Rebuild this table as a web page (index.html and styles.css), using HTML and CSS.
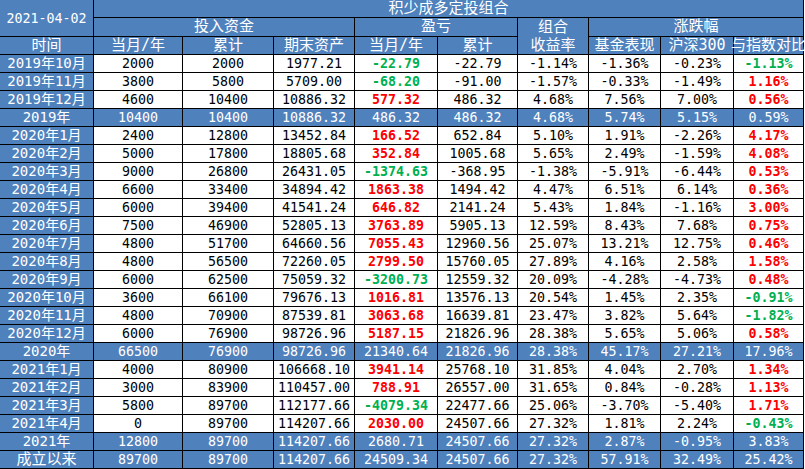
FILE: index.html
```html
<!DOCTYPE html>
<html lang="zh-CN">
<head>
<meta charset="utf-8">
<title>积少成多定投组合</title>
<link rel="stylesheet" href="styles.css">
</head>
<body>
<div class="sheet">
  <div class="c h date">2021-04-02</div>
  <div class="c h zh title">积少成多定投组合</div>
  <div class="c h zh span3">投入资金</div>
  <div class="c h zh span2">盈亏</div>
  <div class="c h zh rate">组合<br>收益率</div>
  <div class="c h zh span3">涨跌幅</div>
  <div class="c h zh">时间</div>
  <div class="c h zh">当月/年</div>
  <div class="c h zh">累计</div>
  <div class="c h zh">期末资产</div>
  <div class="c h zh">当月/年</div>
  <div class="c h zh">累计</div>
  <div class="c h zh">基金表现</div>
  <div class="c h zh">沪深300</div>
  <div class="c h zh">与指数对比</div>

  <div class="c h lab">2019年10月</div><div class="c">2000</div><div class="c">2000</div><div class="c">1977.21</div><div class="c g">-22.79</div><div class="c">-22.79</div><div class="c">-1.14%</div><div class="c">-1.36%</div><div class="c">-0.23%</div><div class="c g">-1.13%</div>
  <div class="c h lab">2019年11月</div><div class="c">3800</div><div class="c">5800</div><div class="c">5709.00</div><div class="c g">-68.20</div><div class="c">-91.00</div><div class="c">-1.57%</div><div class="c">-0.33%</div><div class="c">-1.49%</div><div class="c r">1.16%</div>
  <div class="c h lab">2019年12月</div><div class="c">4600</div><div class="c">10400</div><div class="c">10886.32</div><div class="c r">577.32</div><div class="c">486.32</div><div class="c">4.68%</div><div class="c">7.56%</div><div class="c">7.00%</div><div class="c r">0.56%</div>
  <div class="c h lab">2019年</div><div class="c h">10400</div><div class="c h">10400</div><div class="c h">10886.32</div><div class="c h">486.32</div><div class="c h">486.32</div><div class="c h">4.68%</div><div class="c h">5.74%</div><div class="c h">5.15%</div><div class="c h">0.59%</div>
  <div class="c h lab">2020年1月</div><div class="c">2400</div><div class="c">12800</div><div class="c">13452.84</div><div class="c r">166.52</div><div class="c">652.84</div><div class="c">5.10%</div><div class="c">1.91%</div><div class="c">-2.26%</div><div class="c r">4.17%</div>
  <div class="c h lab">2020年2月</div><div class="c">5000</div><div class="c">17800</div><div class="c">18805.68</div><div class="c r">352.84</div><div class="c">1005.68</div><div class="c">5.65%</div><div class="c">2.49%</div><div class="c">-1.59%</div><div class="c r">4.08%</div>
  <div class="c h lab">2020年3月</div><div class="c">9000</div><div class="c">26800</div><div class="c">26431.05</div><div class="c g">-1374.63</div><div class="c">-368.95</div><div class="c">-1.38%</div><div class="c">-5.91%</div><div class="c">-6.44%</div><div class="c r">0.53%</div>
  <div class="c h lab">2020年4月</div><div class="c">6600</div><div class="c">33400</div><div class="c">34894.42</div><div class="c r">1863.38</div><div class="c">1494.42</div><div class="c">4.47%</div><div class="c">6.51%</div><div class="c">6.14%</div><div class="c r">0.36%</div>
  <div class="c h lab">2020年5月</div><div class="c">6000</div><div class="c">39400</div><div class="c">41541.24</div><div class="c r">646.82</div><div class="c">2141.24</div><div class="c">5.43%</div><div class="c">1.84%</div><div class="c">-1.16%</div><div class="c r">3.00%</div>
  <div class="c h lab">2020年6月</div><div class="c">7500</div><div class="c">46900</div><div class="c">52805.13</div><div class="c r">3763.89</div><div class="c">5905.13</div><div class="c">12.59%</div><div class="c">8.43%</div><div class="c">7.68%</div><div class="c r">0.75%</div>
  <div class="c h lab">2020年7月</div><div class="c">4800</div><div class="c">51700</div><div class="c">64660.56</div><div class="c r">7055.43</div><div class="c">12960.56</div><div class="c">25.07%</div><div class="c">13.21%</div><div class="c">12.75%</div><div class="c r">0.46%</div>
  <div class="c h lab">2020年8月</div><div class="c">4800</div><div class="c">56500</div><div class="c">72260.05</div><div class="c r">2799.50</div><div class="c">15760.05</div><div class="c">27.89%</div><div class="c">4.16%</div><div class="c">2.58%</div><div class="c r">1.58%</div>
  <div class="c h lab">2020年9月</div><div class="c">6000</div><div class="c">62500</div><div class="c">75059.32</div><div class="c g">-3200.73</div><div class="c">12559.32</div><div class="c">20.09%</div><div class="c">-4.28%</div><div class="c">-4.73%</div><div class="c r">0.48%</div>
  <div class="c h lab">2020年10月</div><div class="c">3600</div><div class="c">66100</div><div class="c">79676.13</div><div class="c r">1016.81</div><div class="c">13576.13</div><div class="c">20.54%</div><div class="c">1.45%</div><div class="c">2.35%</div><div class="c g">-0.91%</div>
  <div class="c h lab">2020年11月</div><div class="c">4800</div><div class="c">70900</div><div class="c">87539.81</div><div class="c r">3063.68</div><div class="c">16639.81</div><div class="c">23.47%</div><div class="c">3.82%</div><div class="c">5.64%</div><div class="c g">-1.82%</div>
  <div class="c h lab">2020年12月</div><div class="c">6000</div><div class="c">76900</div><div class="c">98726.96</div><div class="c r">5187.15</div><div class="c">21826.96</div><div class="c">28.38%</div><div class="c">5.65%</div><div class="c">5.06%</div><div class="c r">0.58%</div>
  <div class="c h lab">2020年</div><div class="c h">66500</div><div class="c h">76900</div><div class="c h">98726.96</div><div class="c h">21340.64</div><div class="c h">21826.96</div><div class="c h">28.38%</div><div class="c h">45.17%</div><div class="c h">27.21%</div><div class="c h">17.96%</div>
  <div class="c h lab">2021年1月</div><div class="c">4000</div><div class="c">80900</div><div class="c">106668.10</div><div class="c r">3941.14</div><div class="c">25768.10</div><div class="c">31.85%</div><div class="c">4.04%</div><div class="c">2.70%</div><div class="c r">1.34%</div>
  <div class="c h lab">2021年2月</div><div class="c">3000</div><div class="c">83900</div><div class="c">110457.00</div><div class="c r">788.91</div><div class="c">26557.00</div><div class="c">31.65%</div><div class="c">0.84%</div><div class="c">-0.28%</div><div class="c r">1.13%</div>
  <div class="c h lab">2021年3月</div><div class="c">5800</div><div class="c">89700</div><div class="c">112177.66</div><div class="c g">-4079.34</div><div class="c">22477.66</div><div class="c">25.06%</div><div class="c">-3.70%</div><div class="c">-5.40%</div><div class="c r">1.71%</div>
  <div class="c h lab">2021年4月</div><div class="c">0</div><div class="c">89700</div><div class="c">114207.66</div><div class="c r">2030.00</div><div class="c">24507.66</div><div class="c">27.32%</div><div class="c">1.81%</div><div class="c">2.24%</div><div class="c g">-0.43%</div>
  <div class="c h lab">2021年</div><div class="c h">12800</div><div class="c h">89700</div><div class="c h">114207.66</div><div class="c h">2680.71</div><div class="c h">24507.66</div><div class="c h">27.32%</div><div class="c h">2.87%</div><div class="c h">-0.95%</div><div class="c h">3.83%</div>
  <div class="c h zh">成立以来</div><div class="c h">89700</div><div class="c h">89700</div><div class="c h">114207.66</div><div class="c h">24509.34</div><div class="c h">24507.66</div><div class="c h">27.32%</div><div class="c h">57.91%</div><div class="c h">32.49%</div><div class="c h">25.42%</div>
</div>
</body>
</html>
```

FILE: styles.css
```css
html, body {
  margin: 0;
  padding: 0;
  background: #ffffff;
}

.sheet {
  display: grid;
  grid-template-columns: 93px 88px 90px 80px 82px 79px 70px 71px 72px 69px;
  grid-template-rows: 17px 18px 17px repeat(23, 17px);
  gap: 1px;
  padding: 0 1px 1px 0;
  width: max-content;
  background: #000000;
  font-family: "DejaVu Sans Mono", "Noto Sans CJK SC", monospace;
  font-size: 13.3px;
  color: #000000;
}

.c {
  display: flex;
  align-items: flex-start;
  justify-content: center;
  box-sizing: border-box;
  padding-top: 1px;
  white-space: nowrap;
  background: #ffffff;
  line-height: 16px;
}

.h {
  background: #4f81bd;
  color: #ffffff;
}

.zh {
  font-size: 15px;
  padding-top: 0;
}

.lab {
  font-size: 14px;
  padding-top: 0;
}

.date {
  grid-row: span 2;
  align-items: center;
  padding-top: 1px;
}

.title {
  grid-column: span 9;
}

.span3 {
  grid-column: span 3;
}

.span2 {
  grid-column: span 2;
}

.rate {
  grid-row: span 2;
  text-align: center;
  line-height: 18px;
}

.r {
  color: #ff0000;
  font-weight: bold;
}

.g {
  color: #00b050;
  font-weight: bold;
}
```
